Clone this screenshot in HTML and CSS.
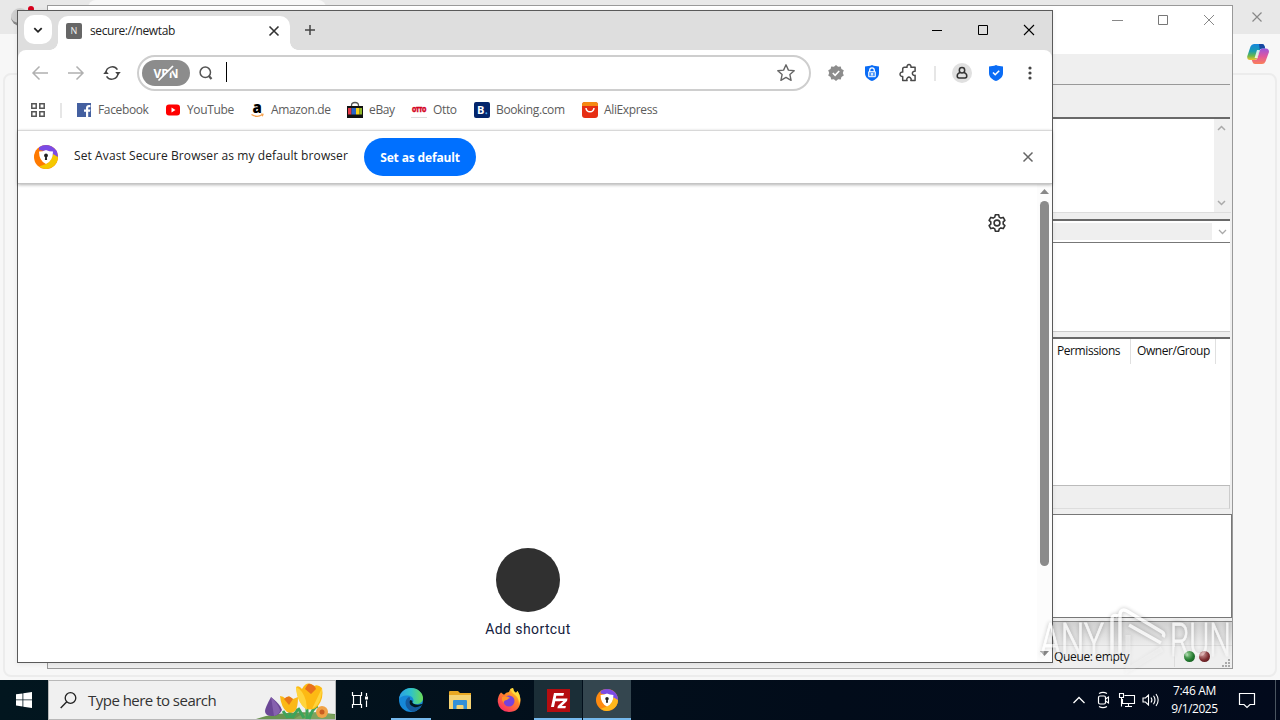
FILE: index.html
```html
<!DOCTYPE html>
<html lang="en">
<head>
    <meta charset="UTF-8">
    <title>secure://newtab</title>
    <link rel="stylesheet" href="styles.css">
</head>
<body>
    <div class="desktop">

        <!-- Edge window at the back -->
        <div class="edge-window">
            <div class="edge-tabs">
                <span class="edge-avatar"></span>
                <span class="edge-dot"></span>
                <div class="edge-tab"></div>
                <svg class="edge-close" width="12" height="12" viewBox="0 0 12 12"><path d="M1.500 1.500l9 9M10.500 1.500l-9 9" stroke="#888" stroke-width="1.200" fill="none"/></svg>
            </div>
            <div class="edge-toolbar">
                <svg width="24" height="24" viewBox="0 0 24 24">
                    <defs>
                        <linearGradient id="copA" x1="0" y1="0" x2="0" y2="1"><stop offset="0" stop-color="#1787dd"/><stop offset=".45" stop-color="#1a9cb0"/><stop offset=".75" stop-color="#6cb848"/><stop offset="1" stop-color="#f2c230"/></linearGradient>
                        <linearGradient id="copB" x1="0" y1="0" x2="0" y2="1"><stop offset="0" stop-color="#9a55dc"/><stop offset=".5" stop-color="#e0569e"/><stop offset="1" stop-color="#fb8058"/></linearGradient>
                    </defs>
                    <path d="M8 2h8q2 0 2.500 2l.7 2.500h-3q-2 0-2.700 2l-2.300 7.500Q10.500 18 8.500 18H4Q1 18 1.200 14.500L4.500 4.500Q5.500 2 8 2z" fill="url(#copA)"/>
                    <path d="M13 2h3q2 0 2.500 2l.7 2.500h-3q-1.700 0-2.500 1z" fill="#1747a0"/>
                    <path d="M16 22H9q-2 0-2.500-2L5.800 18h3q2 0 2.700-2l2.300-7.500Q14.500 6.500 16.500 6.500H20q3 0 3 3.500l-3.500 9.500Q18.500 22 16 22z" fill="url(#copB)"/>
                    <path d="M11 8h2.600l-2.300 8H8.600z" fill="#fff" opacity=".8"/>
                </svg>
            </div>
            <div class="edge-page"></div>
        </div>

        <!-- FileZilla window -->
        <div class="fz-window">
            <div class="fz-title">
                <svg width="12" height="12" viewBox="0 0 12 12"><path d="M1 6.500h11" stroke="#888" fill="none"/></svg>
                <svg width="12" height="12" viewBox="0 0 12 12"><path d="M1.500 1.500h9v9h-9z" stroke="#777" fill="none"/></svg>
                <svg width="12" height="12" viewBox="0 0 12 12"><path d="M1 1l10 10M11 1L1 11" stroke="#888" fill="none"/></svg>
            </div>
            <div class="fz-toolbar"></div>
            <div class="fz-quickconnect"></div>
            <div class="fz-log">
                <div class="fz-scroll">
                    <svg width="9" height="6" viewBox="0 0 9 6"><path d="M1 5l3.500-3.500L8 5" stroke="#aaa" stroke-width="1.500" fill="none"/></svg>
                    <svg width="9" height="6" viewBox="0 0 9 6"><path d="M1 1l3.500 3.500L8 1" stroke="#aaa" stroke-width="1.500" fill="none"/></svg>
                </div>
            </div>
            <div class="fz-splitter"></div>
            <div class="fz-combo">
                <div class="fz-combo-field"></div>
                <svg width="9" height="6" viewBox="0 0 9 6"><path d="M1 1l3.500 3.500L8 1" stroke="#aaa" stroke-width="1.300" fill="none"/></svg>
            </div>
            <div class="fz-tree"></div>
            <div class="fz-splitter thin"></div>
            <div class="fz-list">
                <div class="fz-columns">
                    <span class="col-perm">Permissions</span>
                    <span class="col-owner">Owner/Group</span>
                </div>
            </div>
            <div class="fz-list-status"></div>
            <div class="fz-queue"></div>
            <div class="fz-queue-tabs"></div>
            <div class="fz-status">
                <span class="fz-disk"></span>
                <span class="queue-text">Queue: empty</span>
                <i class="led green"></i>
                <i class="led red"></i>
                <svg class="grip" width="10" height="10" viewBox="0 0 10 10" fill="#aaa"><path d="M7 1h2v2H7zM7 4h2v2H7zM4 4h2v2H4zM7 7h2v2H7zM4 7h2v2H4zM1 7h2v2H1z"/></svg>
            </div>
        </div>

        <!-- Avast Secure Browser -->
        <div class="browser">
            <div class="titlebar">
                <div class="tab-menu">
                    <svg width="12" height="12" viewBox="0 0 12 12"><path d="M2.300 4.200L6 7.800l3.700-3.600" stroke="#222" stroke-width="1.800" fill="none"/></svg>
                </div>
                <div class="tab">
                    <span class="favicon">N</span>
                    <span class="tab-title">secure://newtab</span>
                    <svg width="12" height="12" viewBox="0 0 12 12"><path d="M1.500 1.500l9 9M10.500 1.500l-9 9" stroke="#333" stroke-width="1.600" fill="none"/></svg>
                </div>
                <svg class="new-tab" width="12" height="12" viewBox="0 0 12 12"><path d="M6 1v10M1 6h10" stroke="#444" stroke-width="1.500" fill="none"/></svg>
                <div class="window-buttons">
                    <svg width="12" height="12" viewBox="0 0 12 12"><path d="M1 6.500h10" stroke="#000" fill="none"/></svg>
                    <svg width="12" height="12" viewBox="0 0 12 12"><path d="M1.500 1.500h9v9h-9z" stroke="#000" fill="none"/></svg>
                    <svg width="12" height="12" viewBox="0 0 12 12"><path d="M1 1l10 10M11 1L1 11" stroke="#000" stroke-width="1.100" fill="none"/></svg>
                </div>
            </div>

            <div class="toolbar">
                <div class="tool">
                    <svg width="18" height="18" viewBox="0 0 18 18"><path d="M17 9H2M8.500 2.500L2 9l6.500 6.500" stroke="#b0b0b0" stroke-width="1.500" fill="none"/></svg>
                </div>
                <div class="tool">
                    <svg width="18" height="18" viewBox="0 0 18 18"><path d="M1 9h15M9.500 2.500L16 9l-6.500 6.500" stroke="#b0b0b0" stroke-width="1.500" fill="none"/></svg>
                </div>
                <div class="tool">
                    <svg width="18" height="18" viewBox="0 0 18 18"><path d="M3 9a6.200 6.200 0 0 1 11.400-3.300M15 9A6.200 6.200 0 0 1 3.600 12.300" stroke="#444" stroke-width="1.500" fill="none"/><path d="M.2 9.900L3 6.700l2.800 3.200zM12.200 8.100h5.600L15 11.300z" fill="#444"/></svg>
                </div>
                <div class="omnibox">
                    <div class="vpn">VPN
                        <svg width="22" height="18" viewBox="0 0 22 18"><path d="M5 17.300L19 3.300" stroke="#8c8c8c" stroke-width="2.500" fill="none"/><path d="M3.500 16.500L18 2" stroke="#fff" stroke-width="1.700" fill="none"/></svg>
                    </div>
                    <svg class="search-icon" width="14" height="14" viewBox="0 0 14 14"><circle cx="6.300" cy="6.300" r="5.200" stroke="#555" stroke-width="1.500" fill="none"/><path d="M9.700 9.700l2.800 3.300" stroke="#555" stroke-width="2.200" fill="none"/></svg>
                    <span class="caret"></span>
                    <svg class="star" width="20" height="20" viewBox="0 0 20 20"><path d="M10 1.800l2.400 5.300 5.800.6-4.300 3.900 1.200 5.700-5.100-2.900-5.100 2.900 1.200-5.700L1.800 7.700l5.800-.6z" stroke="#666" stroke-width="1.400" stroke-linejoin="round" fill="none"/></svg>
                </div>
                <div class="tool">
                    <svg width="16" height="16" viewBox="0 0 16 16"><path d="M8 0l2.100 1.700 2.700-.3.600 2.600L15.800 5.300 14.800 8l1 2.600-2.400 1.300-.6 2.700-2.700-.3L8 16l-2.100-1.700-2.700.3-.6-2.700L.2 10.600l1-2.600-1-2.700L2.600 4l.6-2.600 2.700.3z" fill="#8c8c8c"/><path d="M4.800 8l2.300 2.300 4.100-4.300" stroke="#fff" stroke-width="1.600" fill="none"/></svg>
                </div>
                <div class="tool">
                    <svg width="16" height="18" viewBox="0 0 16 18"><path d="M8 1c2.300 1 4.700 1.300 7 1.400V9c0 4-3 6.500-7 8-4-1.500-7-4-7-8V2.400C3.300 2.300 5.700 2 8 1z" fill="#0a6cf5"/><path d="M5.700 8V6.200a2.300 2.300 0 0 1 4.600 0V8" stroke="#fff" stroke-width="1.300" fill="none"/><path d="M4.700 7.700h6.600v5H4.700z" stroke="#fff" fill="#4b96fb"/><path d="M8 9v2.500" stroke="#fff" stroke-width="1.500"/></svg>
                </div>
                <div class="tool puzzle">
                    <svg width="20" height="20" viewBox="0 0 20 20"><path d="M5.500 4.200h2.600a2 2 0 1 1 3.800 0h4.200v4h-.6a2.100 2.100 0 1 0 .6 4.100v5.300h-4.300a2.200 2.200 0 1 0-3.700 0H3.700v-4.200a2.200 2.200 0 1 1 0-4.300V6q0-1.800 1.800-1.800z" stroke="#4a4a4a" stroke-width="1.500" stroke-linejoin="round" fill="none"/></svg>
                </div>
                <span class="divider"></span>
                <div class="tool small">
                    <svg width="20" height="20" viewBox="0 0 20 20"><circle cx="10" cy="10" r="10" fill="#e0e0e0"/><circle cx="10" cy="7.200" r="2.700" stroke="#333" stroke-width="1.500" fill="none"/><path d="M8 9.500c-1.900.7-2.800 1.900-2.800 3.500 0 1.300.7 1.900 1.800 1.900h6c1.100 0 1.800-.6 1.800-1.900 0-1.600-.9-2.800-2.800-3.500" stroke="#333" stroke-width="1.500" fill="none"/></svg>
                </div>
                <div class="tool small">
                    <svg width="16" height="18" viewBox="0 0 16 18"><path d="M8 1c2.300 1 4.700 1.300 7 1.400V9c0 4-3 6.500-7 8-4-1.500-7-4-7-8V2.400C3.300 2.300 5.700 2 8 1z" fill="#0a6cf5"/><path d="M5 8.500l2.200 2.200 4-4" stroke="#fff" stroke-width="1.600" fill="none"/></svg>
                </div>
                <div class="tool small">
                    <svg width="4" height="14" viewBox="0 0 4 14" fill="#444"><circle cx="2" cy="2" r="1.600"/><circle cx="2" cy="7" r="1.600"/><circle cx="2" cy="12" r="1.600"/></svg>
                </div>
            </div>

            <div class="bookmarks">
                <svg class="apps" width="16" height="16" viewBox="0 0 16 16"><path d="M1.800 1.800h4.400v4.400H1.800zM9.800 1.800h4.400v4.400H9.800zM1.800 9.800h4.400v4.400H1.800zM9.800 9.800h4.400v4.400H9.800z" stroke="#555" stroke-width="1.500" fill="none"/></svg>
                <span class="divider"></span>
                <div class="bookmark-list">
                    <a class="bookmark"><svg width="16" height="16" viewBox="0 0 16 16"><path d="M1 1h14v14H1z" fill="#4460a0"/><path d="M10 15V9.800H8V7.500h2V6c0-2 1.200-3 3-3h1.400v2.200h-1.200c-.9 0-1 .4-1 1.200v1.100h2.200L14 9.800h-1.800V15z" fill="#fff"/></svg><span>Facebook</span></a>
                    <a class="bookmark"><svg width="16" height="16" viewBox="0 0 16 16"><rect x="1" y="2.500" width="14" height="11" rx="3" fill="#f00"/><path d="M6.500 5.500L10.500 8l-4 2.500z" fill="#fff"/></svg><span>YouTube</span></a>
                    <a class="bookmark amazon"><svg width="16" height="16" viewBox="0 0 16 16"><text x="3.500" y="11" font-family="Open Sans, sans-serif" font-size="15" font-weight="800" fill="#000">a</text><path d="M2.500 12.500q5.500 3.500 10.500.3M12 12l2 .2-.7 2" stroke="#f5a04c" stroke-width="1.200" fill="none"/></svg><span>Amazon.de</span></a>
                    <a class="bookmark"><svg width="16" height="16" viewBox="0 0 16 16"><path d="M4.500 5V3.500a3.500 3 0 0 1 7 0V5" stroke="#555" stroke-width="1.300" fill="none"/><path d="M0 4h16v12H0z" fill="#111"/><path d="M1 6h3.500v6.500H1z" fill="#e43745"/><path d="M4.500 6H9v6.500H4.500z" fill="#2865c8"/><path d="M9 6h3.500v6.500H9z" fill="#f5d21c"/><path d="M12.500 6H15v6.500h-2.500z" fill="#90b82a"/></svg><span>eBay</span></a>
                    <a class="bookmark"><svg width="16" height="16" viewBox="0 0 16 16"><text x="1" y="10" textLength="14" lengthAdjust="spacingAndGlyphs" font-family="Open Sans, sans-serif" font-size="6" font-weight="800" fill="#d4021d" stroke="#d4021d" stroke-width=".4">OTTO</text><path d="M0 15.500h16" stroke="#ddd"/></svg><span>Otto</span></a>
                    <a class="bookmark"><svg width="16" height="16" viewBox="0 0 16 16"><rect width="16" height="16" rx="2" fill="#03256c"/><text x="3" y="12" font-family="Open Sans, sans-serif" font-size="11" font-weight="700" fill="#fff">B</text><circle cx="12.300" cy="11.200" r="1" fill="#48a8f0"/></svg><span>Booking.com</span></a>
                    <a class="bookmark"><svg width="16" height="16" viewBox="0 0 16 16"><rect width="16" height="16" rx="3" fill="#e62e14"/><path d="M0 4V3q0-3 3-3h10q3 0 3 3v1z" fill="#f58a13"/><path d="M4 6c.5 5 7.500 5 8 0" stroke="#fff" stroke-width="1.500" fill="none"/></svg><span>AliExpress</span></a>
                </div>
            </div>

            <div class="infobar">
                <svg width="24" height="24" viewBox="0 0 24 24">
                    <circle cx="12" cy="12" r="12" fill="#ff7a00"/>
                    <path d="M5 2.300A12 12 0 0 1 24 12L19 15 17 7 5 5z" fill="#7b4be5"/>
                    <path d="M24 12A12 12 0 0 1 5 21.500L12 19q5-2 7-10z" fill="#f5c800"/>
                    <path d="M12 5q3 1.500 7 1.500 0 9.500-7 12.500-7-3-7-12.500 4 0 7-1.500z" fill="#fff"/>
                    <circle cx="12" cy="10.500" r="1.900" fill="#222"/><path d="M11.200 11h1.600l.3 4h-2.200z" fill="#222"/>
                </svg>
                <span class="infobar-text">Set Avast Secure Browser as my default browser</span>
                <button class="default-button">Set as default</button>
                <svg class="infobar-close" width="12" height="12" viewBox="0 0 12 12"><path d="M1.500 1.500l9 9M10.500 1.500l-9 9" stroke="#666" stroke-width="1.500" fill="none"/></svg>
            </div>

            <div class="content">
                <div class="newtab">
                    <svg class="gear" width="20" height="20" viewBox="0 0 20 20"><path d="M8.300 1.800h3.400l.5 2.300 1.700 1 2.300-.7 1.700 2.900-1.700 1.600v2.200l1.700 1.600-1.700 2.900-2.300-.7-1.700 1-.5 2.300H8.300l-.5-2.300-1.700-1-2.300.7-1.700-2.900 1.700-1.600V8.900L2.100 7.300l1.700-2.900 2.300.7 1.700-1z" stroke="#333" stroke-width="1.600" stroke-linejoin="round" fill="none"/><circle cx="10" cy="10" r="2.900" stroke="#333" stroke-width="1.600" fill="none"/></svg>
                    <div class="shortcut">
                        <span class="shortcut-circle"></span>
                        <span class="shortcut-label">Add shortcut</span>
                    </div>
                </div>
                <div class="scrollbar">
                    <svg width="9" height="5" viewBox="0 0 9 5"><path d="M0 5L4.500 0 9 5z" fill="#888"/></svg>
                    <div class="thumb"></div>
                    <svg width="9" height="5" viewBox="0 0 9 5"><path d="M0 0l4.500 5L9 0z" fill="#888"/></svg>
                </div>
            </div>
        </div>

        <div class="watermark">
            <svg width="200" height="72" viewBox="0 0 200 72" fill="none" stroke="#fff">
                <text x="3" y="53" textLength="64" lengthAdjust="spacingAndGlyphs" class="watermark-text">ANY</text>
                <path d="M75 56V16q0-5 6-3M83 50V11q1-6 7-3l35 21q3 2 1 5M92 22l32 18" stroke-width="3.500"/>
                <path d="M91 32v35l34-21" stroke-width="5" stroke-opacity=".5"/>
                <text x="133" y="53" textLength="61" lengthAdjust="spacingAndGlyphs" class="watermark-text">RUN</text>
            </svg>
        </div>

        <div class="taskbar">
            <div class="start">
                <svg width="16" height="16" viewBox="0 0 16 16" fill="#fff"><path d="M0 2.300l6.500-.9v6.100H0zM7.300 1.300L16 0v7.500H7.300zM0 8.300h6.500v6.200L0 13.600zM7.300 8.300H16V16l-8.700-1.300z"/></svg>
            </div>
            <div class="search">
                <svg width="17" height="17" viewBox="0 0 17 17"><circle cx="10.500" cy="6" r="5.300" stroke="#222" stroke-width="1.300" fill="none"/><path d="M6.800 9.800L.7 16" stroke="#222" stroke-width="1.400"/></svg>
                <span>Type here to search</span>
                <svg class="flowers" width="79" height="38" viewBox="0 0 79 38">
                    <path d="M0 38Q28 28 79 33v5z" fill="#699350"/><path d="M38 38q14-11 41-4v4z" fill="#7da35e"/>
                    <path d="M15 16q-6 11-6 14 0 5 7 5t10-6q-1-5-11-13z" fill="#6b4796"/><path d="M15 16l3 19q6-2 6-6-2-6-9-13z" fill="#8661ae"/>
                    <path d="M34 37V27M32 37l-5-7M36 37l6-9M51 38V25M48 37l-6-10M53 38q4-12 9-13" stroke="#3da45a" stroke-width="3" fill="none"/>
                    <path d="M24 15q3 0 6 3l3-3 4 3 5-2q0 11-3 14t-8 1q-6-5-7-16z" fill="#fbb817"/><path d="M28 18q4-5 9 0l-4 6z" fill="#e8771a"/>
                    <path d="M40 6q3-2 6 2 5-9 12-3 4-2 8 2 2 10-4 18-6 6-13 2-8-7-9-21z" fill="#fdb913"/><path d="M40 6q7 3 10 14l1 9q-10-6-11-23zM66 7L56 28q10-5 10-21z" fill="#ffd43c"/><path d="M49 8q3-6 5-5 5 1 6 5l-5 5z" fill="#e8701c"/>
                    <circle cx="66" cy="31" r="6" fill="#f0a246"/><circle cx="66" cy="31" r="2.500" fill="#c85d20"/>
                </svg>
            </div>
            <div class="task">
                <svg width="18" height="18" viewBox="0 0 18 18"><path d="M1.500 1v3.500h9V1M1.500 17v-3.500h9V17M2.500 4.500v9M9.500 4.500v9M15.500 2v3M15.500 9.500V16" stroke="#fff" stroke-width="1.200" fill="none"/><path d="M14 5.500h3v3h-3z" fill="#fff"/></svg>
            </div>
            <div class="task running edge">
                <svg width="24" height="24" viewBox="0 0 24 24">
                    <defs><linearGradient id="edgeTop"><stop offset="0" stop-color="#2b9ee5"/><stop offset=".5" stop-color="#2fc3c9"/><stop offset="1" stop-color="#6bdc55"/></linearGradient></defs>
                    <circle cx="12" cy="12" r="12" fill="#1688d8"/>
                    <path d="M0 11C1 4 6 0 12 0c7 0 12 5 12 10 0 4-3 6-7 6-2 0-3.500-.6-3-1.500C15.500 12 14 8 9 7.500 5 7 1.500 8.500 0 11z" fill="url(#edgeTop)"/>
                    <path d="M9 9.500c-5 4-2 13 5 14.200 4-.7 7-3 8.500-6-6 3-13-1-11.500-6.700.3-1.200 0-2-2-1.500z" fill="#155a9e"/>
                    <path d="M11 12q-2 5 4 7 3 .8 7.500-1.500 1.500-1.500 0-1.500-4 1.500-8-.3-2-1-1-3z" fill="#02161f"/>
                </svg>
            </div>
            <div class="task">
                <svg width="22" height="20" viewBox="0 0 22 20"><path d="M0 2q0-1 1-1h8l2 2h11v16H0z" fill="#e9a823"/><path d="M0 5h22v14H0z" fill="#f5d374"/><path d="M4 11q0-1 1-1h12q1 0 1 1v8h-3.500v-3q0-1-1-1h-5q-1 0-1 1v3H4z" fill="#3390d8"/></svg>
            </div>
            <div class="task">
                <svg width="24" height="24" viewBox="0 0 24 24">
                    <defs><linearGradient id="foxBody" x1="1" y1="0" x2=".3" y2="1"><stop offset="0" stop-color="#ffde35"/><stop offset=".45" stop-color="#ff8a26"/><stop offset="1" stop-color="#fa2f63"/></linearGradient></defs>
                    <path d="M4 4.500l3 2.300Q9 4 12 4q.5-3 4-4 0 3 3 5l1.500-2Q24 8 23.500 13 22.500 24 12 24 2 23.500.8 14 .5 8 4 4.500z" fill="url(#foxBody)"/>
                    <circle cx="12" cy="13" r="5.500" fill="#7642dc"/><path d="M5 9q5-2 8 1-2 .5-3 2-3 0-3.500 3Q4 12 5 9z" fill="#ff9228"/>
                    <path d="M13 1q2 4 5.500 6.500T22 16q3-6-1.500-13l-1.500 2q-3-2-3-5z" fill="#ffd93c"/>
                </svg>
            </div>
            <div class="task running active">
                <svg width="23" height="23" viewBox="0 0 23 23"><path d="M0 0h23v23H0z" fill="#b50d10"/><path d="M7 4h10l-.6 2.800H9.300L8.700 9.500h5l-.6 2.700H8.200L7 18H4zM12.500 9.500h8l-.5 2.400-5.300 5h4.200l-.5 2.300h-8l.5-2.300 5.400-5h-4.300z" fill="#fff"/></svg>
            </div>
            <div class="task running current">
                <svg width="22" height="22" viewBox="0 0 24 24">
                    <circle cx="12" cy="12" r="12" fill="#ff8a10"/>
                    <path d="M5 2.300A12 12 0 0 1 24 12L19 15 17 7 5 5z" fill="#7b4be5"/>
                    <path d="M24 12A12 12 0 0 1 5 21.500L12 19q5-2 7-10z" fill="#ffb81c"/>
                    <path d="M12 5q3 1.500 7 1.500 0 9.500-7 12.500-7-3-7-12.500 4 0 7-1.500z" fill="#fff"/>
                    <circle cx="12" cy="10.500" r="1.900" fill="#222"/><path d="M11.200 11h1.600l.3 4h-2.200z" fill="#222"/>
                </svg>
            </div>
            <div class="tray">
                <svg width="24" height="18" viewBox="0 0 24 18"><path d="M6.500 12L12 6.500l5.500 5.500" stroke="#fff" stroke-width="1.300" fill="none"/></svg>
                <svg width="24" height="18" viewBox="0 0 24 18"><rect x="7.500" y="5" width="7" height="8" rx="1.500" stroke="#fff" stroke-width="1.200" fill="none"/><path d="M14.500 8l3-2v6l-3-2M8 2.500Q12 .3 16 2.500M8 15.500q4 2.200 8 0" stroke="#fff" stroke-width="1.100" fill="none"/></svg>
                <svg width="24" height="18" viewBox="0 0 24 18"><path d="M9.500 4.500h10v8h-12V8M13.500 12.500v3M10 15.500h7M4.500 2.500h4v4h-4zM6.500 6.500v9" stroke="#fff" stroke-width="1.100" fill="none"/></svg>
                <svg width="24" height="18" viewBox="0 0 24 18"><path d="M4 7h2.500L9.500 4v10L6.500 11H4zM12 6.500q1.800 2.500 0 5M14.500 4.800q3 4.200 0 8.400M17 3q4.300 6 0 12" stroke="#fff" stroke-width="1.100" fill="none"/></svg>
            </div>
            <div class="clock"><span>7:46 AM</span><span class="date">9/1/2025</span></div>
            <div class="notifications">
                <svg width="18" height="18" viewBox="0 0 18 18"><path d="M1.500 2.500h15v11H12l-3 3-3-3H1.500z" stroke="#fff" stroke-width="1.200" fill="none"/></svg>
            </div>
            <div class="show-desktop"></div>
        </div>
    </div>
</body>
</html>
```
FILE: styles.css
```css
* {
    box-sizing: border-box;
}
body {
    margin: 0;
    font-family: "Open Sans", "Noto Sans", sans-serif;
    font-size: 12px;
    color: #222;
}
svg {
    display: block;
    flex: none;
    overflow: visible;
}
.desktop {
    position: relative;
    width: 1280px;
    height: 720px;
    overflow: hidden;
    background: #f7f7f7;
}

/* Edge */
.edge-window {
    position: absolute;
    left: 0;
    top: 0;
    width: 1280px;
    height: 680px;
    background: #f7f7f7;
    display: flex;
    flex-direction: column;
}
.edge-tabs {
    position: relative;
    height: 34px;
    flex: none;
    background: #e8e8e8;
    display: flex;
    padding-left: 11px;
}
.edge-avatar {
    width: 18px;
    height: 18px;
    margin-top: 8px;
    border-radius: 50%;
    background: #cfcfcf;
    border-bottom: 3px solid #888;
}
.edge-dot {
    position: absolute;
    left: 28px;
    top: 6px;
    width: 6px;
    height: 6px;
    border-radius: 50%;
    background: #d8001d;
}
.edge-tab {
    width: 238px;
    margin-left: 59px;
    border-radius: 8px 8px 0 0;
    background: #f7f7f7;
}
.edge-close {
    margin: 11px 17px 0 auto;
}
.edge-toolbar {
    height: 39px;
    flex: none;
    display: flex;
    justify-content: flex-end;
    padding: 8px 10px 0 0;
}
.edge-page {
    height: 604px;
    margin: 0 3px;
    border: 2px solid #ececec;
    border-radius: 8px;
    background: #f7f7f7;
}

/* FileZilla */
.fz-window {
    position: absolute;
    left: 47px;
    top: 5px;
    width: 1186px;
    height: 664px;
    border: 1px solid #999;
    background: #efefef;
    display: flex;
    flex-direction: column;
}
.fz-title {
    height: 48px;
    flex: none;
    background: #fff;
    display: flex;
    justify-content: flex-end;
    gap: 34px;
    padding: 8px 17px 0 0;
}
.fz-toolbar {
    height: 31px;
    flex: none;
    margin-right: 2px;
    border-bottom: 1px solid #999;
}
.fz-quickconnect {
    height: 34px;
    flex: none;
    margin-right: 2px;
    border-bottom: 2px solid #696969;
}
.fz-log {
    height: 94px;
    flex: none;
    margin-right: 1px;
    background: #fff;
    display: flex;
    justify-content: flex-end;
    border-bottom: 1px solid #ddd;
}
.fz-scroll {
    width: 17px;
    background: #f0f0f0;
    display: flex;
    flex-direction: column;
    justify-content: space-between;
    align-items: center;
    padding: 6px 2px 6px 0;
}
.fz-splitter {
    height: 8px;
    flex: none;
    margin-right: 2px;
    border-bottom: 2px solid #696969;
}
.fz-splitter.thin {
    height: 7px;
}
.fz-combo {
    height: 22px;
    flex: none;
    margin-right: 2px;
    background: #fff;
    border-bottom: 1px solid #777;
    display: flex;
    align-items: center;
    justify-content: space-between;
    padding-right: 3px;
}
.fz-combo-field {
    width: 1164px;
    height: 17px;
    background: #efefef;
}
.fz-tree {
    height: 89px;
    flex: none;
    margin-right: 2px;
    background: #fff;
    border-bottom: 1px solid #ccc;
}
.fz-list {
    height: 147px;
    flex: none;
    margin-right: 2px;
    background: #fff;
    border-bottom: 1px solid #bbb;
}
.fz-columns {
    display: flex;
    justify-content: flex-end;
    height: 25px;
    line-height: 24px;
    padding-right: 14px;
    color: #111;
    letter-spacing: -0.42px;
}
.fz-columns span {
    border-right: 1px solid #e0e0e0;
}
.col-perm {
    width: 79px;
    padding-left: 5px;
}
.col-owner {
    width: 85px;
    padding-left: 6px;
}
.fz-list-status {
    height: 23px;
    flex: none;
    margin-right: 2px;
    border-right: 1px solid #ccc;
    border-bottom: 1px solid #ddd;
}
.fz-queue {
    height: 104px;
    flex: none;
    margin-top: 5px;
    background: #fff;
    border: 1px solid #777;
}
.fz-queue-tabs {
    height: 25px;
    flex: none;
    margin-top: 3px;
    border-top: 1px solid #888;
    border-bottom: 1px solid #ddd;
    background: linear-gradient(#d0d0d0, #ececec);
}
.fz-status {
    flex: 1;
    display: flex;
    align-items: center;
    justify-content: flex-end;
}
.fz-disk {
    width: 12px;
    height: 12px;
    margin-right: 11px;
    border-radius: 50%;
    background: #666;
}
.queue-text {
    width: 121px;
    color: #111;
    letter-spacing: -0.35px;
    border-right: 1px solid #ddd;
    line-height: 20px;
}
.led {
    width: 11px;
    height: 11px;
    border-radius: 50%;
    margin-left: 4px;
    margin-top: -1px;
}
.green {
    margin-left: 9px;
    background: radial-gradient(circle at 35% 30%, #8fd08f, #247a30 55%, #0b4a14);
}
.red {
    background: radial-gradient(circle at 35% 30%, #d8a0a0, #7c2c30 55%, #4a1014);
}
.grip {
    margin: 11px 1px 0 11px;
}

/* Avast Secure Browser */
.browser {
    position: absolute;
    left: 17px;
    top: 10px;
    width: 1036px;
    height: 653px;
    border: 1px solid #5a5a5a;
    background: #dedede;
    box-shadow: 0 1px 5px rgba(0, 0, 0, 0.08);
    display: flex;
    flex-direction: column;
}
.titlebar {
    height: 39px;
    flex: none;
    display: flex;
    padding-left: 6px;
}
.tab-menu {
    width: 28px;
    height: 29px;
    margin-top: 4px;
    border-radius: 10px;
    background: #fff;
    display: flex;
    align-items: center;
    justify-content: center;
}
.tab {
    position: relative;
    width: 232px;
    margin: 5px 0 0 6px;
    padding: 0 10px 5px 8px;
    border-radius: 10px 10px 0 0;
    background: #fff;
    display: flex;
    align-items: center;
}
.tab::before,
.tab::after {
    content: "";
    position: absolute;
    bottom: 0;
    width: 8px;
    height: 8px;
}
.tab::before {
    left: -8px;
    background: radial-gradient(circle at 0 0, transparent 7.5px, #fff 8px);
}
.tab::after {
    right: -8px;
    background: radial-gradient(circle at 100% 0, transparent 7.5px, #fff 8px);
}
.favicon {
    width: 16px;
    height: 16px;
    border-radius: 2px;
    background: #666;
    color: #eee;
    font-size: 9px;
    line-height: 16px;
    text-align: center;
}
.tab-title {
    flex: 1;
    margin-left: 8px;
    letter-spacing: -0.4px;
}
.new-tab {
    margin: 13px 0 0 14px;
}
.window-buttons {
    display: flex;
    gap: 34px;
    margin: 13px 17px 0 auto;
}
.toolbar {
    height: 46px;
    flex: none;
    display: flex;
    align-items: center;
    padding-left: 4px;
    background: #fff;
    border-radius: 8px 8px 0 0;
}
.tool {
    width: 36px;
    display: flex;
    justify-content: center;
}
.tool.small {
    width: 34px;
}
.tool.puzzle {
    padding-left: 1px;
}
.omnibox {
    width: 674px;
    height: 36px;
    margin: 0 7px;
    padding: 0 13px 0 3px;
    border: 2px solid #cecece;
    border-radius: 18px;
    display: flex;
    align-items: center;
}
.vpn {
    position: relative;
    width: 48px;
    height: 26px;
    border-radius: 13px;
    background: #8c8c8c;
    color: #fff;
    font-size: 12px;
    font-weight: 700;
    line-height: 27px;
    text-align: center;
}
.vpn svg {
    position: absolute;
    left: 13px;
    top: 4px;
}
.search-icon {
    margin-left: 9px;
}
.caret {
    width: 1px;
    height: 20px;
    margin: 0 0 2px 13px;
    background: #000;
}
.star {
    margin-left: auto;
}
.divider {
    width: 2px;
    height: 15px;
    background: #e6e6e6;
}
.toolbar .divider {
    margin: 0 9px 0 8px;
}
.bookmarks {
    height: 34px;
    flex: none;
    display: flex;
    align-items: center;
    padding: 0 0 6px 12px;
    background: #fff;
}
.bookmarks .divider {
    margin: 0 14px 0 14px;
}
.bookmark-list {
    display: grid;
    grid-template-columns: 89px 84px 98px 64px 63px 108px 80px;
}
.bookmark {
    display: flex;
    align-items: center;
    gap: 6px;
    color: #5c5c5c;
    letter-spacing: -0.36px;
    white-space: nowrap;
}
.bookmark span {
    margin-top: -1px;
}
.infobar {
    position: relative;
    height: 54px;
    flex: none;
    display: flex;
    align-items: center;
    padding: 0 18px 0 16px;
    background: #fff;
    border-top: 1px solid #d8d8d8;
    border-bottom: 1px solid #c4c4c4;
    box-shadow: 0 1px 3px rgba(0, 0, 0, 0.3);
}
.infobar-text {
    width: 274px;
    margin: 0 16px;
    padding-bottom: 3px;
    white-space: nowrap;
    letter-spacing: 0.1px;
}
.default-button {
    width: 112px;
    height: 38px;
    padding: 0;
    border: none;
    border-radius: 19px;
    background: #0070ff;
    color: #fff;
    font-family: inherit;
    font-size: 12px;
    font-weight: 700;
    letter-spacing: -0.15px;
}
.infobar-close {
    margin-left: auto;
}
.content {
    flex: 1;
    display: flex;
    background: #fff;
}
.newtab {
    flex: 1;
    display: flex;
    flex-direction: column;
    align-items: center;
}
.gear {
    align-self: flex-end;
    margin: 29px 30px 0 0;
}
.shortcut {
    margin: 315px 0 0 1px;
    display: flex;
    flex-direction: column;
    align-items: center;
    font-family: Roboto, sans-serif;
    font-size: 14px;
    color: #14213d;
}
.shortcut-circle {
    width: 64px;
    height: 64px;
    border-radius: 50%;
    background: #303030;
}
.shortcut-label {
    margin-top: 9px;
    letter-spacing: 0.4px;
}
.scrollbar {
    width: 15px;
    display: flex;
    flex-direction: column;
    align-items: center;
    padding: 5px 0 6px;
    background: #fcfcfc;
}
.thumb {
    width: 9px;
    height: 365px;
    margin: 7px 0 auto;
    border-radius: 5px;
    background: #8b8b8b;
}

/* Watermark over the corner */
.watermark {
    position: absolute;
    left: 1037px;
    top: 603px;
    filter: drop-shadow(0 0 2px rgba(0, 0, 0, 0.35));
    opacity: 0.7;
    -webkit-mask-image: linear-gradient(#000 50%, rgba(0, 0, 0, 0.35) 75%);
    mask-image: linear-gradient(#000 50%, rgba(0, 0, 0, 0.35) 75%);
}
.watermark-text {
    font-family: Roboto, sans-serif;
    font-size: 46px;
    font-weight: 300;
    fill: #fff;
    stroke: #fff;
    stroke-width: 0.8px;
}

/* Taskbar */
.taskbar {
    position: absolute;
    left: 0;
    bottom: 0;
    width: 1280px;
    height: 40px;
    display: flex;
    background: linear-gradient(90deg, #02161f, #020c1a 65%, #020a1c);
    color: #fff;
}
.start {
    width: 48px;
    display: flex;
    align-items: center;
    justify-content: center;
}
.search {
    width: 288px;
    display: flex;
    align-items: center;
    padding-left: 11px;
    border: 1px solid #b8b8b8;
    background: #f0f0f0;
    color: #333;
    font-size: 15px;
    letter-spacing: -0.52px;
}
.search span {
    margin: 0 auto 0 11px;
}
.task {
    width: 48px;
    margin-right: 1px;
    display: flex;
    align-items: center;
    justify-content: center;
}
.running {
    border-bottom: 2px solid #76b9ed;
    padding-top: 2px;
}
.task.edge {
    width: 40px;
    margin: 0 5px 0 6px;
}
.active {
    background: #1b2e37;
}
.current {
    background: #34464f;
}
.tray {
    display: flex;
    align-items: center;
    margin-left: auto;
}
.clock {
    width: 62px;
    display: flex;
    flex-direction: column;
    align-items: center;
    padding: 2px 0 0 1px;
    line-height: 18px;
    letter-spacing: -0.3px;
}
.date {
    letter-spacing: -0.45px;
}
.notifications {
    width: 48px;
    display: flex;
    align-items: center;
    justify-content: center;
    margin-left: -2px;
}
.show-desktop {
    width: 5px;
    margin-left: 4px;
    border-left: 1px solid #4a5560;
}
```
